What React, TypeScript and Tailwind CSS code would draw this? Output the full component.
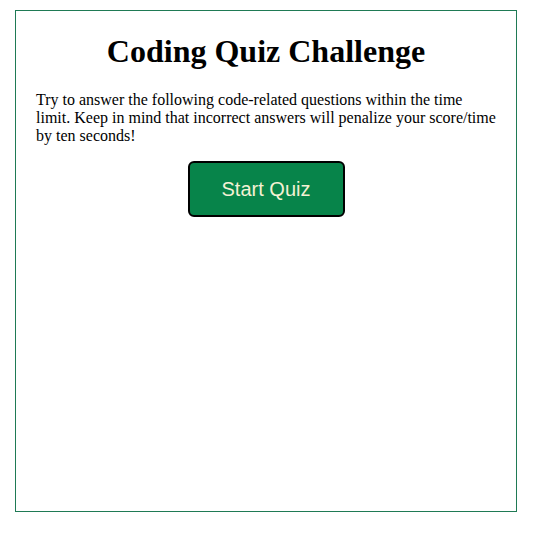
export default function App() {
  return (
    <div className="bg-white w-[547px] h-[541px] pt-[10px] pl-[15px]">
      <div
        className="w-[502px] h-[502px] border border-[#1f7a55] px-[20px] pt-[22px] text-black"
        style={{ fontFamily: '"Liberation Serif", "Times New Roman", serif' }}
      >
        <h1 className="text-[32px] font-bold text-center leading-[37px] mb-[21px]">
          Coding Quiz Challenge
        </h1>
        <p className="text-[16px] leading-[18px] mb-[16px]">
          Try to answer the following code-related questions within the time limit. Keep in mind that incorrect answers will penalize your score/time by ten seconds!
        </p>
        <div className="flex justify-center">
          <button
            className="w-[157px] h-[56px] bg-[#07844a] border-2 border-black rounded-[6px] text-[20px] text-[#f4f1d4]"
            style={{ fontFamily: '"Liberation Sans", Arial, sans-serif' }}
          >
            Start Quiz
          </button>
        </div>
      </div>
    </div>
  );
}
